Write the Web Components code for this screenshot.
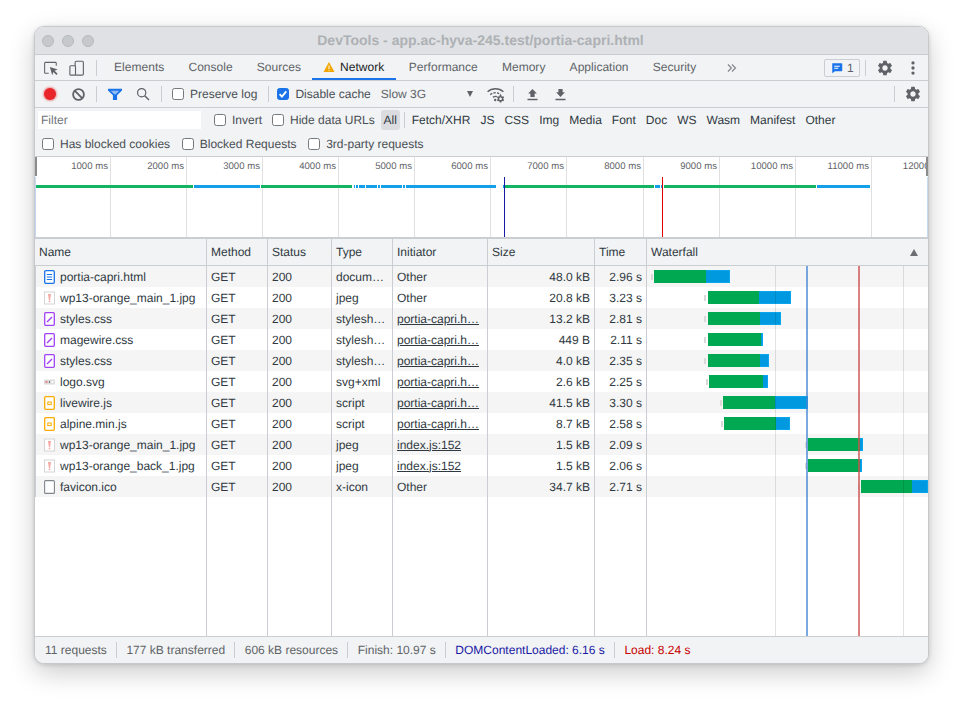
<!DOCTYPE html>
<html lang="en">
<head>
<meta charset="utf-8">
<title>DevTools</title>
<style>
  html, body { margin: 0; background: #fff; }
  body { box-sizing: border-box; min-height: 706px; padding: 26px 0 0 34px; font: 12px "Liberation Sans", Arial, sans-serif; text-rendering: geometricPrecision; }
</style>
</head>
<body>
<dt-window>
  <dt-titlebar>DevTools - app.ac-hyva-245.test/portia-capri.html</dt-titlebar>
  <dt-tabs></dt-tabs>
  <dt-toolbar></dt-toolbar>
  <dt-filters></dt-filters>
  <dt-overview></dt-overview>
  <net-table>
    <net-row kind="doc" method="GET" status="200" type="docum…" initiator="Other" size="48.0 kB" time="2.96 s" bar="651,653,654,706,730">portia-capri.html</net-row>
    <net-row kind="img" method="GET" status="200" type="jpeg" initiator="Other" size="20.8 kB" time="3.23 s" bar="704,706,708,759,791">wp13-orange_main_1.jpg</net-row>
    <net-row kind="css" method="GET" status="200" type="stylesh…" initiator="portia-capri.h…" link size="13.2 kB" time="2.81 s" bar="704,706,708,760,781">styles.css</net-row>
    <net-row kind="css" method="GET" status="200" type="stylesh…" initiator="portia-capri.h…" link size="449 B" time="2.11 s" bar="704,706,708,761,763">magewire.css</net-row>
    <net-row kind="css" method="GET" status="200" type="stylesh…" initiator="portia-capri.h…" link size="4.0 kB" time="2.35 s" bar="704,706,708,760,769">styles.css</net-row>
    <net-row kind="svg" method="GET" status="200" type="svg+xml" initiator="portia-capri.h…" link size="2.6 kB" time="2.25 s" bar="706,708,709,763,768">logo.svg</net-row>
    <net-row kind="js" method="GET" status="200" type="script" initiator="portia-capri.h…" link size="41.5 kB" time="3.30 s" bar="720,722,723,775,808">livewire.js</net-row>
    <net-row kind="js" method="GET" status="200" type="script" initiator="portia-capri.h…" link size="8.7 kB" time="2.58 s" bar="721,723,724,776,790">alpine.min.js</net-row>
    <net-row kind="img" method="GET" status="200" type="jpeg" initiator="index.js:152" link size="1.5 kB" time="2.09 s" bar="805,807,808,860,863">wp13-orange_main_1.jpg</net-row>
    <net-row kind="img" method="GET" status="200" type="jpeg" initiator="index.js:152" link size="1.5 kB" time="2.06 s" bar="805,807,808,860,862">wp13-orange_back_1.jpg</net-row>
    <net-row kind="ico" method="GET" status="200" type="x-icon" initiator="Other" size="34.7 kB" time="2.71 s" bar="858,860,861,912,928">favicon.ico</net-row>
  </net-table>
  <dt-statusbar></dt-statusbar>
</dt-window>

<script>
const GEAR = 'M19.14 12.94c.04-.3.06-.61.06-.94 0-.32-.02-.64-.07-.94l2.03-1.58a.49.49 0 0 0 .12-.61l-1.92-3.32a.488.488 0 0 0-.59-.22l-2.39.96c-.5-.38-1.03-.7-1.62-.94l-.36-2.54a.484.484 0 0 0-.48-.41h-3.84c-.24 0-.43.17-.47.41l-.36 2.54c-.59.24-1.13.57-1.62.94l-2.39-.96c-.22-.08-.47 0-.59.22L2.74 8.87c-.12.21-.08.47.12.61l2.03 1.58c-.05.3-.09.63-.09.94s.02.64.07.94l-2.03 1.58a.49.49 0 0 0-.12.61l1.92 3.32c.12.22.37.29.59.22l2.39-.96c.5.38 1.03.7 1.62.94l.36 2.54c.05.24.24.41.48.41h3.84c.24 0 .44-.17.47-.41l.36-2.54c.59-.24 1.13-.56 1.62-.94l2.39.96c.22.08.47 0 .59-.22l1.92-3.32c.12-.22.07-.47-.12-.61l-2.01-1.58zM12 15.6c-1.98 0-3.6-1.62-3.6-3.6s1.62-3.6 3.6-3.6 3.6 1.62 3.6 3.6-1.62 3.6-3.6 3.6z';

// 24x24 unless noted
const ICONS = {
  gear: `<path fill="#5f6368" d="${GEAR}"/>`,
  inspect: `<path fill="none" stroke="#5f6368" stroke-width="1.4" d="M9 19H4.5a1 1 0 0 1-1-1V5.5a1 1 0 0 1 1-1H18a1 1 0 0 1 1 1V9"/><path fill="#5f6368" d="M10.5 10.5l10.5 3.6-4.2 1.7 4 4-1.6 1.6-4-4-1.6 4.3z"/>`,
  device: `<rect x="9.5" y="3" width="11" height="18.5" rx="1.5" fill="none" stroke="#5f6368" stroke-width="1.5"/><rect x="2.5" y="9" width="7.5" height="12.5" rx="1.3" fill="#f1f3f4" stroke="#5f6368" stroke-width="1.5"/>`,
  clear: `<circle cx="12" cy="12" r="7.6" fill="none" stroke="#5f6368" stroke-width="2.6"/><path stroke="#5f6368" stroke-width="2.6" d="M6.6 6.6l10.8 10.8"/>`,
  filter: `<path fill="#1a73e8" d="M1.5 4h21v2.6l-7.4 7.2V21H8.9v-7.2L1.5 6.6z"/><path fill="#8fbcf5" d="M5.6 7h12.8l-5.2 5.4h-2.4z"/>`,
  search: `<circle cx="10" cy="10" r="6.2" fill="none" stroke="#5f6368" stroke-width="1.8"/><path stroke="#5f6368" stroke-width="2.2" d="M14.6 14.6l6.4 6.4"/>`,
  upload: `<path fill="#5f6368" d="M12 3l7 7.5h-3.6V16H8.6v-5.5H5zM4 18.6h16V21H4z"/>`,
  download: `<path fill="#5f6368" d="M8.6 3h6.8v5.5H19L12 16 5 8.5h3.6zM4 18.6h16V21H4z"/>`,
  wifi: `<g fill="none" stroke="#5f6368" stroke-width="1.7"><path d="M2 8.5c5.6-5 14.4-5 20 0"/><path d="M5.4 12.2c3.8-3.3 9.4-3.3 13.2 0" stroke-dasharray="3 1.5"/><path d="M8.8 15.6c1.9-1.5 3.5-1.6 5-.9"/></g><circle cx="11.6" cy="19" r="1.5" fill="#5f6368"/><path fill="#5f6368" transform="translate(12.6 11.6) scale(.48)" d="${GEAR}"/>`,
  more: `<path fill="none" stroke="#80868b" stroke-width="2" d="M5 6l6 6-6 6M12 6l6 6-6 6"/>`,
  dots: `<circle cx="12" cy="3.4" r="2.8" fill="#5f6368"/><circle cx="12" cy="12" r="2.8" fill="#5f6368"/><circle cx="12" cy="20.6" r="2.8" fill="#5f6368"/>`,
  warn: `<path fill="#f2a600" d="M12 2l11 20H1z"/><path fill="#fff" d="M11 9h2v7h-2zM11 17.3h2v2h-2z"/>`,
  msg: `<path fill="#1a73e8" d="M3 2.5h18a1.5 1.5 0 0 1 1.5 1.5v13a1.5 1.5 0 0 1-1.5 1.5H8l-5.5 4V4A1.5 1.5 0 0 1 3 2.5z"/><path fill="#fff" d="M6.5 7.5h11v2h-11zM6.5 11.5h8v2h-8z"/>`
};

class DtIcon extends HTMLElement {
  connectedCallback() {
    const size = this.getAttribute('size') || 18;
    this.attachShadow({ mode: 'open' }).innerHTML = `
      <style>:host { display: inline-flex; width: ${size}px; height: ${size}px; } svg { display: block; }</style>
      <svg width="${size}" height="${size}" viewBox="0 0 24 24">${ICONS[this.getAttribute('name')]}</svg>`;
  }
}

class DtCheck extends HTMLElement {
  connectedCallback() {
    const on = this.hasAttribute('checked');
    this.attachShadow({ mode: 'open' }).innerHTML = `
      <style>
        :host { display: inline-flex; align-items: center; gap: 6px; color: #4a4f54; white-space: nowrap; }
        .box { width: 12px; height: 12px; box-sizing: border-box; border: 1px solid #75787c; border-radius: 2.5px; background: #fff; flex: none; }
        .box.on { background: #1a73e8; border-color: #1a73e8; }
        svg { display: block; }
      </style>
      <span class="box ${on ? 'on' : ''}">${on ? '<svg width="10" height="10" viewBox="0 0 10 10"><path d="M1.6 5.2l2.3 2.4 4.4-5.2" fill="none" stroke="#fff" stroke-width="1.8"/></svg>' : ''}</span>
      <slot></slot>`;
  }
}

class DtWindow extends HTMLElement {
  constructor() {
    super();
    this.attachShadow({ mode: 'open' }).innerHTML = `
      <style>
        :host {
          display: flex;
          flex-direction: column;
          width: 895px;
          height: 638px;
          box-sizing: border-box;
          border: 1px solid #c6c8cb;
          border-radius: 10px;
          overflow: hidden;
          background: #fff;
          box-shadow: 0 9px 26px rgba(0, 0, 0, .2), 0 1px 4px rgba(0, 0, 0, .14);
        }
      </style>
      <slot></slot>`;
  }
}

class DtTitlebar extends HTMLElement {
  constructor() {
    super();
    this.attachShadow({ mode: 'open' }).innerHTML = `
      <style>
        :host {
          display: flex;
          align-items: center;
          flex: none;
          height: 27px;
          padding-left: 7px;
          background: #dfe1e4;
          border-bottom: 1px solid #c9cbce;
        }
        .lights { display: flex; gap: 8px; }
        .lights i { width: 12px; height: 12px; box-sizing: border-box; border-radius: 50%; background: #c6c9cb; border: 1px solid #b6b9bb; }
        .title { flex: 1; text-align: center; margin-right: 61px; padding-bottom: 1px; font: bold 14px "Liberation Sans", Arial, sans-serif; color: #aeb1b4; }
      </style>
      <div class="lights"><i></i><i></i><i></i></div>
      <div class="title"><slot></slot></div>`;
  }
}

class DtTabs extends HTMLElement {
  constructor() {
    super();
    const tabs = ['Elements', 'Console', 'Sources', 'Network', 'Performance', 'Memory', 'Application', 'Security'];
    this.attachShadow({ mode: 'open' }).innerHTML = `
      <style>
        :host {
          display: flex;
          align-items: stretch;
          flex: none;
          height: 25px;
          padding-left: 3px;
          background: #f1f3f4;
          border-bottom: 1px solid #cacdd1;
          color: #5f6368;
          letter-spacing: .02px;
        }
        .ib { width: 26px; display: flex; align-items: center; justify-content: center; }
        .sep { width: 1px; height: 16px; background: #cacdd1; align-self: center; margin: 0 5px 0 5px; }
        .tab { display: flex; align-items: center; padding: 0 12.1px 2px; height: 25px; box-sizing: border-box; }
        .tab.on { color: #202124; border-bottom: 2px solid #1a73e8; padding: 0 11.5px 0 11px; gap: 5px; margin: 0 1px 0 -1px; }
        .right { margin-left: auto; display: flex; align-items: center; }
        .badge { display: flex; align-items: center; gap: 4px; width: 36px; height: 18px; box-sizing: border-box; padding-left: 6px; border: 1px solid #cacdd1; border-radius: 2px; }
        .right .sep { margin: 0 6px 0 5px; }
      </style>
      <span class="ib"><dt-icon name="inspect" size="18"></dt-icon></span>
      <span class="ib"><dt-icon name="device" size="18"></dt-icon></span>
      <span class="sep" style="margin-left:6px"></span>
      ${tabs.map(t => t === 'Network'
        ? `<span class="tab on"><dt-icon name="warn" size="12"></dt-icon>${t}</span>`
        : `<span class="tab">${t}</span>`).join('')}
      <span class="ib" style="margin-left:11px"><dt-icon name="more" size="14"></dt-icon></span>
      <div class="right">
        <span class="badge"><dt-icon name="msg" size="12"></dt-icon>1</span>
        <span class="sep"></span>
        <span class="ib"><dt-icon name="gear" size="18"></dt-icon></span>
        <span class="ib" style="width:30px"><dt-icon name="dots" size="14"></dt-icon></span>
      </div>`;
  }
}

class DtToolbar extends HTMLElement {
  constructor() {
    super();
    this.attachShadow({ mode: 'open' }).innerHTML = `
      <style>
        :host {
          display: flex;
          align-items: center;
          flex: none;
          height: 26px;
          padding-left: 1px;
          background: #f1f3f4;
          border-bottom: 1px solid #cacdd1;
          color: #5f6368;
        }
        .ib { width: 28px; height: 26px; flex: none; display: flex; align-items: center; justify-content: center; }
        .sep { width: 1px; height: 16px; background: #cacdd1; flex: none; }
        .rec { width: 12px; height: 12px; border-radius: 50%; background: #e8262a; box-shadow: 0 0 2px 1px rgba(232, 38, 42, .45); }
        .select { display: flex; justify-content: space-between; align-items: center; width: 94px; margin-left: 10px; }
        .arrow { width: 0; height: 0; border: 3.5px solid transparent; border-top: 6px solid #5f6368; border-bottom: 0; margin-right: 2px; }
      </style>
      <span class="ib"><span class="rec"></span></span>
      <span class="ib"><dt-icon name="clear" size="17"></dt-icon></span>
      <span class="sep" style="margin:0 4px"></span>
      <span class="ib"><dt-icon name="filter" size="16"></dt-icon></span>
      <span class="ib" style="width:27px"><dt-icon name="search" size="16"></dt-icon></span>
      <span class="sep" style="margin:0 10px 0 5px"></span>
      <dt-check>Preserve log</dt-check>
      <span class="sep" style="margin:0 8px 0 11px"></span>
      <dt-check checked>Disable cache</dt-check>
      <span class="select">Slow 3G<i class="arrow"></i></span>
      <span class="ib" style="width:22px;margin-left:10px"><dt-icon name="wifi" size="19"></dt-icon></span>
      <span class="sep" style="margin:0 5px 0 6px"></span>
      <span class="ib"><dt-icon name="upload" size="15"></dt-icon></span>
      <span class="ib"><dt-icon name="download" size="15"></dt-icon></span>
      <span class="sep" style="margin-left:auto;margin-right:4px"></span>
      <span class="ib" style="margin-right:1px"><dt-icon name="gear" size="18"></dt-icon></span>`;
  }
}

class DtFilters extends HTMLElement {
  constructor() {
    super();
    const types = ['Fetch/XHR', 'JS', 'CSS', 'Img', 'Media', 'Font', 'Doc', 'WS', 'Wasm', 'Manifest', 'Other'];
    this.attachShadow({ mode: 'open' }).innerHTML = `
      <style>
        :host {
          display: flex;
          flex-direction: column;
          flex: none;
          height: 48px;
          background: #f1f3f4;
          border-bottom: 1px solid #cacdd1;
          color: #303942;
        }
        .row { display: flex; align-items: center; height: 24px; flex: none; }
        .row.two { padding-left: 7px; gap: 11.7px; height: 23px; }
        .input { width: 163px; height: 18px; margin-left: 3px; background: #fff; color: #70757a; box-sizing: border-box; padding-left: 3px; line-height: 19px; flex: none; }
        .all { width: 19px; height: 20px; border-radius: 3px; background: #dadce0; display: flex; align-items: center; justify-content: center; margin: 0 4px 0 6px; flex: none; }
        .sep { width: 1px; height: 16px; background: #cacdd1; margin-right: 2px; flex: none; }
        .t { padding: 0 5px; }
      </style>
      <div class="row">
        <span class="input">Filter</span>
        <dt-check style="margin-left:13px">Invert</dt-check>
        <dt-check style="margin-left:10px">Hide data URLs</dt-check>
        <span class="all">All</span>
        <span class="sep"></span>
        ${types.map(t => `<span class="t">${t}</span>`).join('')}
      </div>
      <div class="row two">
        <dt-check>Has blocked cookies</dt-check>
        <dt-check>Blocked Requests</dt-check>
        <dt-check>3rd-party requests</dt-check>
      </div>`;
  }
}

class DtOverview extends HTMLElement {
  constructor() {
    super();
    // page x of each ruler line, then of each lane segment
    const ticks = [110, 186, 262, 338, 414, 490, 566, 643, 719, 795, 871, 947];
    const segs = [
      ['g', 35, 193], ['b', 194, 260], ['g', 261, 352], ['b', 354, 355], ['b', 356, 358], ['b', 359, 365], ['b', 366, 377],
      ['b', 378, 380], ['b', 381, 402], ['b', 403, 405], ['b', 406, 496], ['b', 503, 504], ['g', 505, 654],
      ['b', 655, 660], ['b', 661, 663], ['g', 664, 816], ['b', 817, 870]
    ];
    this.attachShadow({ mode: 'open' }).innerHTML = `
      <style>
        :host {
          display: block;
          position: relative;
          flex: none;
          height: 80px;
          overflow: hidden;
          background: #fff;
          border-bottom: 2px solid #cacdd1;
          color: #5f6368;
          font-size: 9.6px;
        }
        .tick { position: absolute; top: 0; bottom: 0; width: 1px; background: #e0e0e0; }
        .lab { position: absolute; top: 4px; width: 60px; text-align: right; line-height: 11px; white-space: nowrap; }
        .seg { position: absolute; top: 28.4px; height: 2.2px; }
        .g { background: #12b463; }
        .b { background: #14a0e8; }
        .mark { position: absolute; top: 20px; bottom: 0; width: 1px; }
        .edge { position: absolute; top: 20px; bottom: 0; width: 1px; background: #c6d9f3; }
        .grip { position: absolute; top: 0; height: 19px; width: 2px; background: #8c8c8c; }
      </style>
      ${ticks.map((x, i) => `<span class="tick" style="left:${x - 35}px"></span>
        <span class="lab" style="left:${x - 35 - 62}px">${(i + 1) * 1000} ms</span>`).join('')}
      ${segs.map(([c, a, b]) => `<span class="seg ${c}" style="left:${a - 35}px;width:${b - a}px"></span>`).join('')}
      <span class="mark" style="left:469px;background:#1a1aa6"></span>
      <span class="mark" style="left:627px;background:#e00000"></span>
      <span class="edge" style="left:0"></span>
      <span class="edge" style="right:0"></span>
      <span class="grip" style="left:0"></span>
      <span class="grip" style="right:0"></span>`;
  }
}

// column template is shared by the header, the rows and the empty filler
const COLS = 'grid-template-columns: 171px 61px 64px 61px 95px 107px 52px 282px;';
const CELL_CSS = `
  .c { border-left: 1px solid #cacdd1; padding: 0 4px; white-space: nowrap; overflow: hidden; display: flex; align-items: center; min-width: 0; }
  .c:first-child { border-left: 0; }
  .r { justify-content: flex-end; }
`;

class NetTable extends HTMLElement {
  constructor() {
    super();
    const heads = ['Name', 'Method', 'Status', 'Type', 'Initiator', 'Size', 'Time', 'Waterfall'];
    this.attachShadow({ mode: 'open' }).innerHTML = `
      <style>
        :host { display: flex; flex-direction: column; flex: 1; min-height: 0; background: #fff; color: #303942; }
        ${CELL_CSS}
        .head { display: grid; ${COLS} height: 26px; flex: none; background: #f1f3f4; border-bottom: 1px solid #cacdd1; }
        .head .c:last-child { justify-content: space-between; padding-right: 10px; }
        .up { width: 0; height: 0; border: 4.5px solid transparent; border-bottom: 7px solid #6b6f73; border-top: 0; }
        .body { position: relative; flex: 1; display: flex; flex-direction: column; min-height: 0; }
        .fill { flex: 1; display: grid; ${COLS} }
        .line { position: absolute; top: 0; bottom: 0; }
        .grid { width: 1px; background: rgba(0, 0, 0, .11); }
        .dcl { width: 2px; background: rgba(66, 133, 214, .7); }
        .load { width: 2px; background: rgba(205, 80, 80, .72); }
      </style>
      <div class="head">
        ${heads.map(h => `<div class="c">${h}${h === 'Waterfall' ? '<i class="up"></i>' : ''}</div>`).join('')}
      </div>
      <div class="body">
        <slot></slot>
        <div class="fill">${heads.map(() => '<div class="c"></div>').join('')}</div>
        <span class="line grid" style="left:740px"></span>
        <span class="line grid" style="left:868px"></span>
        <span class="line dcl" style="left:771px"></span>
        <span class="line load" style="left:823px"></span>
      </div>`;
  }
}

const FILE_ICONS = {
  doc: `<rect x=".7" y=".7" width="9.6" height="12.6" rx="1.2" fill="#fff" stroke="#1a73e8" stroke-width="1.3"/><path stroke="#1a73e8" d="M2.8 4.5h5.4M2.8 7h5.4M2.8 9.5h5.4"/>`,
  img: `<rect x=".5" y="1" width="10" height="12" fill="#fff" stroke="#d6d6d6"/><path fill="#f4a9a3" d="M4 3h3L6.1 9H4.9z"/><rect x="4.7" y="9.6" width="1.6" height="1.6" fill="#f4a9a3"/>`,
  css: `<rect x=".7" y=".7" width="9.6" height="12.6" rx="1" fill="#fff" stroke="#a142f4" stroke-width="1.3"/><path stroke="#a142f4" stroke-width="1.4" d="M3 10l5-5"/>`,
  svg: `<rect x="0" y="4.5" width="11" height="5" fill="#dcdcdc"/><rect x="1.5" y="6" width="2" height="2" fill="#e88"/><rect x="5" y="6" width="1" height="2" fill="#777"/><rect x="7.5" y="6" width="2" height="2" fill="#fff"/>`,
  js: `<rect x=".7" y=".7" width="9.6" height="12.6" rx="1" fill="#fff" stroke="#f9ab00" stroke-width="1.3"/><rect x="3.8" y="6" width="3.4" height="2.6" fill="none" stroke="#f9ab00"/>`,
  ico: `<rect x=".6" y=".6" width="9.8" height="12.8" rx="1" fill="#fff" stroke="#80868b" stroke-width="1.1"/>`
};

class NetRow extends HTMLElement {
  connectedCallback() {
    const a = n => this.getAttribute(n);
    const [t0, t1, g0, g1, b1] = a('bar').split(',').map(Number);
    // bar values are page x; the waterfall cell's padding box starts at 647
    const L = 647;
    this.attachShadow({ mode: 'open' }).innerHTML = `
      <style>
        :host { display: grid; ${COLS} height: 21px; flex: none; background: #fff; color: #303942; }
        :host(:nth-child(odd)) { background: #f5f5f5; }
        ${CELL_CSS}
        .name { padding-left: 8px; gap: 6px; }
        .name span { margin-left: -1px; }
        svg { flex: none; display: block; }
        u { text-decoration: underline; }
        .w { position: relative; padding: 0; overflow: visible; }
        .w i { position: absolute; display: block; }
        .tick { top: 8px; height: 6px; background: #d9d9d9; }
        .green { top: 4px; height: 13px; background: #00a851; }
        .blue { top: 4px; height: 13px; box-sizing: border-box; background: #0099e0; border: 1px solid #0aa5ee; border-left: 0; }
      </style>
      <div class="c name"><svg width="11" height="14" viewBox="0 0 11 14">${FILE_ICONS[a('kind')]}</svg><span><slot></slot></span></div>
      <div class="c">${a('method')}</div>
      <div class="c">${a('status')}</div>
      <div class="c">${a('type')}</div>
      <div class="c">${this.hasAttribute('link') ? `<u>${a('initiator')}</u>` : a('initiator')}</div>
      <div class="c r">${a('size')}</div>
      <div class="c r">${a('time')}</div>
      <div class="c w">
        <i class="tick" style="left:${t0 - L}px;width:${t1 - t0}px"></i>
        <i class="green" style="left:${g0 - L}px;width:${g1 - g0}px"></i>
        <i class="blue" style="left:${g1 - L}px;width:${b1 - g1}px"></i>
      </div>`;
  }
}

class DtStatusbar extends HTMLElement {
  constructor() {
    super();
    this.attachShadow({ mode: 'open' }).innerHTML = `
      <style>
        :host {
          display: flex;
          align-items: center;
          flex: none;
          height: 27px;
          box-sizing: border-box;
          padding-left: 1px;
          background: #f1f3f4;
          border-top: 1px solid #cacdd1;
          color: #5f6368;
          white-space: nowrap;
        }
        span { padding: 0 9.3px; border-left: 1px solid #cacdd1; line-height: 16px; }
        span:first-of-type { border-left: 0; padding-left: 9px; }
      </style>
      <span>11 requests</span>
      <span>177 kB transferred</span>
      <span>606 kB resources</span>
      <span>Finish: 10.97 s</span>
      <span style="color:#1a1aa6">DOMContentLoaded: 6.16 s</span>
      <span style="color:#c80000">Load: 8.24 s</span>`;
  }
}

customElements.define('dt-icon', DtIcon);
customElements.define('dt-check', DtCheck);
customElements.define('dt-window', DtWindow);
customElements.define('dt-titlebar', DtTitlebar);
customElements.define('dt-tabs', DtTabs);
customElements.define('dt-toolbar', DtToolbar);
customElements.define('dt-filters', DtFilters);
customElements.define('dt-overview', DtOverview);
customElements.define('net-table', NetTable);
customElements.define('net-row', NetRow);
customElements.define('dt-statusbar', DtStatusbar);
</script>
</body>
</html>
